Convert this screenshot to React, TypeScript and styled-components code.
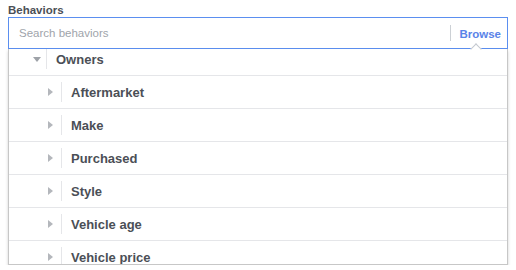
import React, { useEffect, useRef } from "react"
import styled, { createGlobalStyle, css } from "styled-components"

const GlobalStyle = createGlobalStyle`
	body {
		margin: 0;
		background: #fff;
		font-family: "Liberation Sans", Arial, sans-serif;
	}
`

const StyledField = styled.div`
	width: 516px;
	box-sizing: border-box;
	padding: 3px 8px 0;
`

const StyledLabel = styled.div`
	font-size: 11.5px;
	line-height: 14px;
	font-weight: 700;
	color: #4b4f56;
`

const StyledSearch = styled.div`
	height: 32px;
	box-sizing: border-box;
	border: 1px solid #5b8ff0;
	display: flex;
	align-items: center;
	padding: 0 6px 0 10px;
	background: #fff;
`

const StyledInput = styled.input`
	flex: 1;
	border: none;
	outline: none;
	padding: 0;
	margin: 0;
	background: transparent;
	font-family: inherit;
	font-size: 11.5px;
	color: #1d2129;

	&::placeholder {
		color: #a0a4ab;
	}
`

const StyledDivider = styled.span`
	width: 1px;
	height: 16px;
	background: #ccd0d5;
	margin-right: 8px;
`

const StyledBrowse = styled.a`
	font-size: 11.5px;
	font-weight: 700;
	color: #5a83e8;
	cursor: pointer;
	margin-bottom: -1px;
`

const StyledDropdown = styled.div`
	position: relative;
	height: 216px;
	box-sizing: border-box;
	border: 1px solid rgba(0, 0, 0, 0.22);
	border-top: none;
	background: #fff;
	box-shadow: 0 2px 3px rgba(0, 0, 0, 0.18);

	&::before {
		content: "";
		position: absolute;
		right: 27px;
		top: -4px;
		width: 7px;
		height: 7px;
		background: #fff;
		border-top: 1px solid #c4c8cf;
		border-left: 1px solid #c4c8cf;
		transform: rotate(45deg);
		z-index: 1;
	}
`

const StyledList = styled.div`
	height: 100%;
	overflow: hidden;
`

const StyledRow = styled.div<{ depth: number }>`
	height: 33px;
	box-sizing: border-box;
	border-bottom: 1px solid #e5e6e9;
	display: flex;
	align-items: center;
	padding-left: ${(props) => 24 + props.depth * 15}px;
`

const StyledCaret = styled.span<{ open?: boolean }>`
	width: 8px;
	display: flex;
	justify-content: flex-start;

	&::after {
		content: "";
		width: 0;
		height: 0;
		${(props) =>
			props.open
				? css`
						border-left: 4px solid transparent;
						border-right: 4px solid transparent;
						border-top: 5px solid #9ea2a8;
				  `
				: css`
						border-top: 4px solid transparent;
						border-bottom: 4px solid transparent;
						border-left: 5px solid #b4b7bc;
				  `}
	}
`

const StyledRowSep = styled.span`
	width: 1px;
	height: 20px;
	background: #e5e6e9;
	margin-left: 5px;
	margin-right: 9px;
`

const StyledName = styled.span`
	font-size: 13px;
	font-weight: 700;
	color: #4b4f56;
`

const items = [
	{ name: "Owners", depth: 0, open: true },
	{ name: "Aftermarket", depth: 1 },
	{ name: "Make", depth: 1 },
	{ name: "Purchased", depth: 1 },
	{ name: "Style", depth: 1 },
	{ name: "Vehicle age", depth: 1 },
	{ name: "Vehicle price", depth: 1 },
]

const App = () => {
	const list = useRef<HTMLDivElement>(null)

	useEffect(() => {
		if (list.current) list.current.scrollTop = 6
	}, [])

	return (
		<StyledField>
			<GlobalStyle />
			<StyledLabel>Behaviors</StyledLabel>
			<StyledSearch>
				<StyledInput placeholder="Search behaviors" />
				<StyledDivider />
				<StyledBrowse>Browse</StyledBrowse>
			</StyledSearch>
			<StyledDropdown>
				<StyledList ref={list}>
					{items.map((item) => (
						<StyledRow key={item.name} depth={item.depth}>
							<StyledCaret open={item.open} />
							<StyledRowSep />
							<StyledName>{item.name}</StyledName>
						</StyledRow>
					))}
				</StyledList>
			</StyledDropdown>
		</StyledField>
	)
}

export default App
